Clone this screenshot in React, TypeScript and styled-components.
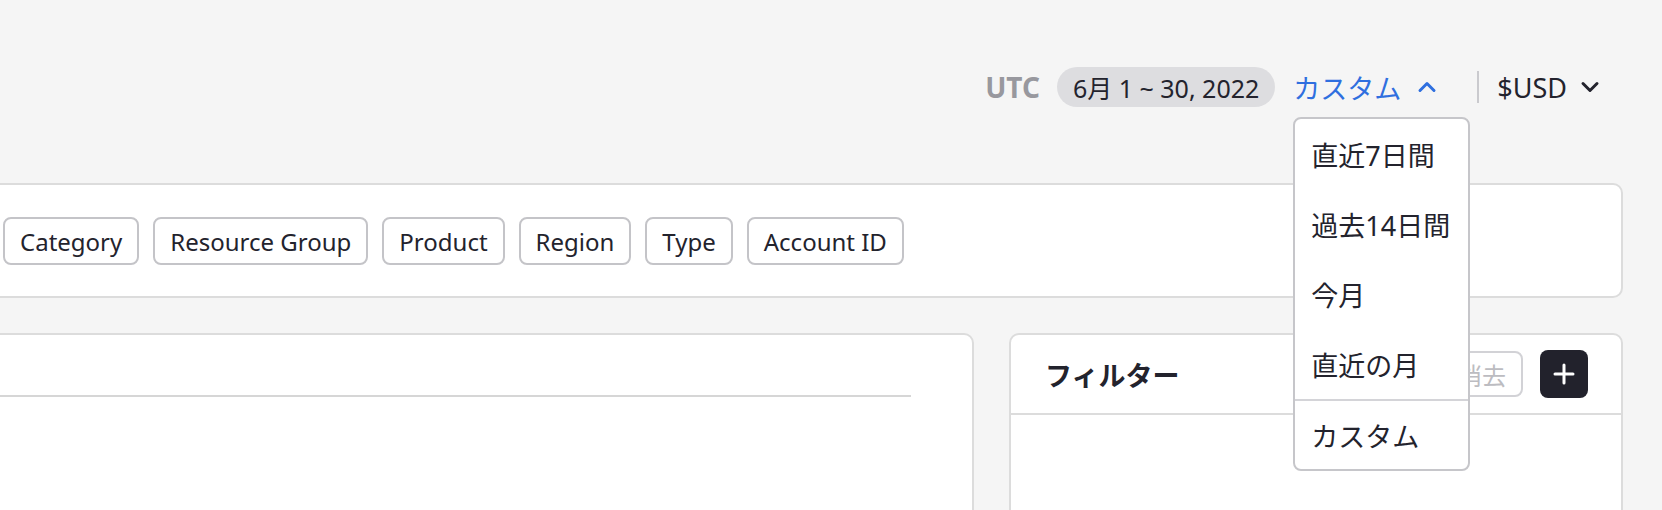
import React from 'react'
import styled, { createGlobalStyle } from 'styled-components'

const GlobalStyle = createGlobalStyle`
  html, body {
    margin: 0;
    padding: 0;
    background: #f5f5f5;
    font-family: 'Noto Sans', 'Noto Sans CJK JP', sans-serif;
    color: #23232d;
  }
  * {
    box-sizing: border-box;
  }
`

const Page = styled.div`
  width: 1662px;
  height: 510px;
  overflow: hidden;
`

const Header = styled.div`
  display: flex;
  align-items: center;
  justify-content: flex-end;
  height: 40px;
  margin-top: 67px;
  margin-bottom: 76px;
  padding-right: 60px;
`

const Zone = styled.span`
  font-size: 28px;
  font-weight: 700;
  color: #98989e;
  margin-right: 17px;
`

const RangePill = styled.span`
  display: inline-flex;
  align-items: center;
  height: 40px;
  padding: 0 16px;
  border-radius: 20px;
  background: #dddde0;
  font-size: 25px;
  color: #23232d;
`

const PresetWrap = styled.div`
  position: relative;
  margin-left: 18px;
`

const PresetButton = styled.button`
  display: flex;
  align-items: center;
  gap: 14px;
  height: 40px;
  padding: 0;
  border: none;
  background: none;
  font-family: inherit;
  font-size: 27px;
  color: #2f6fdf;
  cursor: pointer;
`

const Divider = styled.span`
  width: 2px;
  height: 32px;
  background: #cacace;
  margin: 0 18px 0 38px;
`

const CurrencyButton = styled.button`
  display: flex;
  align-items: center;
  gap: 11px;
  height: 40px;
  padding: 0;
  border: none;
  background: none;
  font-family: inherit;
  font-size: 27px;
  color: #23232d;
  cursor: pointer;
`

const Menu = styled.ul`
  position: absolute;
  top: calc(100% + 10px);
  left: 0;
  width: 177px;
  margin: 0;
  padding: 0;
  list-style: none;
  background: #fff;
  border: 2px solid #c6c6ca;
  border-radius: 8px;
  z-index: 10;
`

const MenuItem = styled.li<{ $divided?: boolean }>`
  display: flex;
  align-items: center;
  height: 70px;
  padding: 0 16px;
  font-size: 27px;
  color: #23232d;
  white-space: nowrap;
  border-top: ${(p) => (p.$divided ? '2px solid #d4d4d8' : 'none')};
`

const Content = styled.div`
  display: grid;
  gap: 35px;
  margin-left: -20px;
  width: 1643px;
`

const Card = styled.div`
  background: #fff;
  border: 2px solid #dcdcdc;
  border-radius: 10px;
`

const GroupCard = styled(Card)`
  display: flex;
  gap: 14px;
  padding: 32px 24px 31px 21px;
`

const Chip = styled.button`
  height: 48px;
  padding: 0 15px;
  border: 2px solid #c4c4c8;
  border-radius: 8px;
  background: #fff;
  font-family: inherit;
  font-size: 24px;
  color: #23232d;
  white-space: nowrap;
`

const Lower = styled.div`
  display: grid;
  grid-template-columns: 1fr 614px;
  gap: 35px;
  height: 220px;
`

const ChartCard = styled(Card)`
  padding: 60px 61px 0 0;
`

const ChartRule = styled.div`
  height: 2px;
  background: #d6d6d6;
`

const FilterCard = styled(Card)`
  display: flex;
  flex-direction: column;
`

const FilterHeader = styled.div`
  display: flex;
  align-items: center;
  height: 80px;
  padding: 0 33px 0 34px;
  border-bottom: 2px solid #dcdcdc;
`

const FilterTitle = styled.h2`
  flex: 1;
  margin: 0;
  font-size: 27px;
  font-weight: 700;
  color: #23232d;
`

const ClearButton = styled.button`
  height: 46px;
  padding: 0 15px;
  border: 2px solid #d2d2d6;
  border-radius: 8px;
  background: #fff;
  font-family: inherit;
  font-size: 24px;
  color: #bcbcc1;
`

const AddButton = styled.button`
  display: flex;
  align-items: center;
  justify-content: center;
  width: 48px;
  height: 48px;
  margin-left: 17px;
  padding: 0;
  border: none;
  border-radius: 8px;
  background: #22222c;
`

const Chevron = ({ up, color }: { up?: boolean; color: string }) => (
  <svg width='24' height='24' viewBox='0 0 24 24' fill='none'>
    <path
      d={up ? 'M5 15.5l7-7 7 7' : 'M5 8.5l7 7 7-7'}
      stroke={color}
      strokeWidth='3'
      strokeLinecap='round'
      strokeLinejoin='round'
    />
  </svg>
)

const PlusIcon = () => (
  <svg width='22' height='22' viewBox='0 0 22 22' fill='none'>
    <path d='M11 2v18M2 11h18' stroke='#fff' strokeWidth='3' strokeLinecap='round' />
  </svg>
)

const presets = ['直近7日間', '過去14日間', '今月', '直近の月']
const groups = ['Category', 'Resource Group', 'Product', 'Region', 'Type', 'Account ID']

const App: React.FC = () => (
  <>
    <GlobalStyle />
    <Page>
      <Header>
        <Zone>UTC</Zone>
        <RangePill>6月 1 ~ 30, 2022</RangePill>
        <PresetWrap>
          <PresetButton type='button'>
            カスタム
            <Chevron up color='#2f6fdf' />
          </PresetButton>
          <Menu>
            {presets.map((p) => (
              <MenuItem key={p}>{p}</MenuItem>
            ))}
            <MenuItem $divided>カスタム</MenuItem>
          </Menu>
        </PresetWrap>
        <Divider />
        <CurrencyButton type='button'>
          $USD
          <Chevron color='#23232d' />
        </CurrencyButton>
      </Header>

      <Content>
        <GroupCard>
          {groups.map((g) => (
            <Chip key={g} type='button'>
              {g}
            </Chip>
          ))}
        </GroupCard>

        <Lower>
          <ChartCard>
            <ChartRule />
          </ChartCard>
          <FilterCard>
            <FilterHeader>
              <FilterTitle>フィルター</FilterTitle>
              <ClearButton type='button'>消去</ClearButton>
              <AddButton type='button'>
                <PlusIcon />
              </AddButton>
            </FilterHeader>
          </FilterCard>
        </Lower>
      </Content>
    </Page>
  </>
)

export default App
